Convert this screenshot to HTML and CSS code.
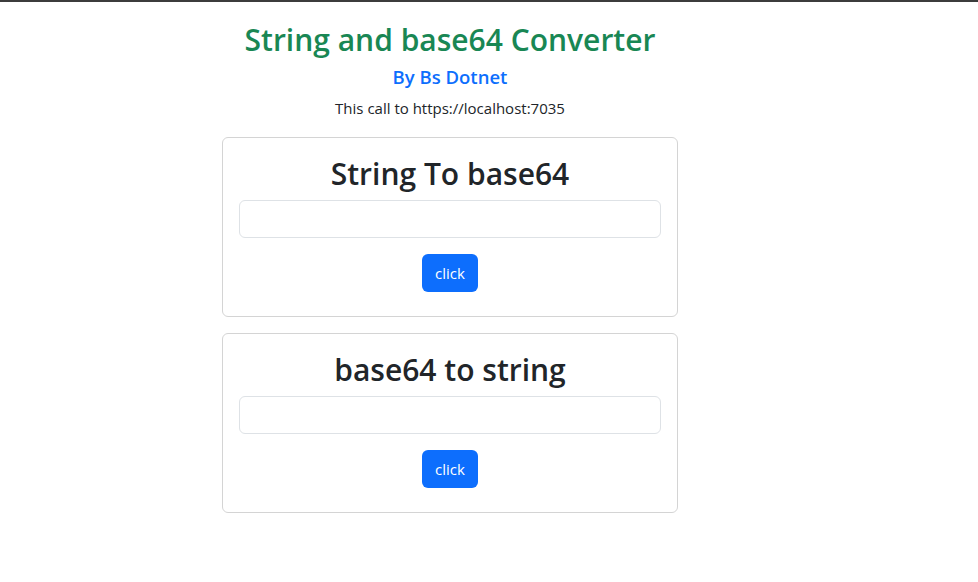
FILE: index.html
```html
<!DOCTYPE html>
<html>
<head>
<meta charset="utf-8">
<link rel="stylesheet" href="styles.css">
</head>
<body>
<div class="topbar"></div>
<main class="wrap">
  <h2 class="title">String and base64 Converter</h2>
  <h5 class="author">By Bs Dotnet</h5>
  <p class="note">This call to https://localhost:7035</p>
  <section class="card">
    <h1 class="card-title">String To base64</h1>
    <input class="field" type="text">
    <button class="btn">click</button>
  </section>
  <section class="card">
    <h1 class="card-title">base64 to string</h1>
    <input class="field" type="text">
    <button class="btn">click</button>
  </section>
</main>
</body>
</html>
```
FILE: styles.css
```css
html, body {
  margin: 0;
  padding: 0;
  background: #fff;
}
body {
  font-family: "Open Sans", "Noto Sans", sans-serif;
  color: #212529;
}
.topbar {
  height: 2px;
  background: #3c3c3c;
}
.wrap {
  width: 456px;
  margin-left: 222px;
  display: flex;
  flex-direction: column;
  align-items: stretch;
  text-align: center;
}
.title {
  margin: 20px 0 0;
  font-size: 30px;
  line-height: 36px;
  font-weight: 600;
  color: #198754;
}
.author {
  margin: 7px 0 0;
  font-size: 18.5px;
  line-height: 24px;
  font-weight: 600;
  color: #0d6efd;
}
.note {
  margin: 7px 0 0;
  font-size: 15px;
  line-height: 24px;
}
.card {
  margin-top: 17px;
  border: 1px solid #d4d4d4;
  border-radius: 6px;
  padding: 16px 16px 24px;
  display: flex;
  flex-direction: column;
  align-items: center;
}
.card + .card {
  margin-top: 16px;
}
.card-title {
  margin: -1px 0 5px;
  font-size: 30px;
  line-height: 42px;
  font-weight: 600;
}
.field {
  box-sizing: border-box;
  width: 100%;
  height: 38px;
  border: 1px solid #dee2e6;
  border-radius: 6px;
  margin: 0 0 16px;
  font: inherit;
}
.btn {
  height: 38px;
  padding: 0 13px;
  border: none;
  border-radius: 6px;
  background: #0d6efd;
  color: #fff;
  font-family: inherit;
  font-size: 15px;
  line-height: 24px;
}
```
